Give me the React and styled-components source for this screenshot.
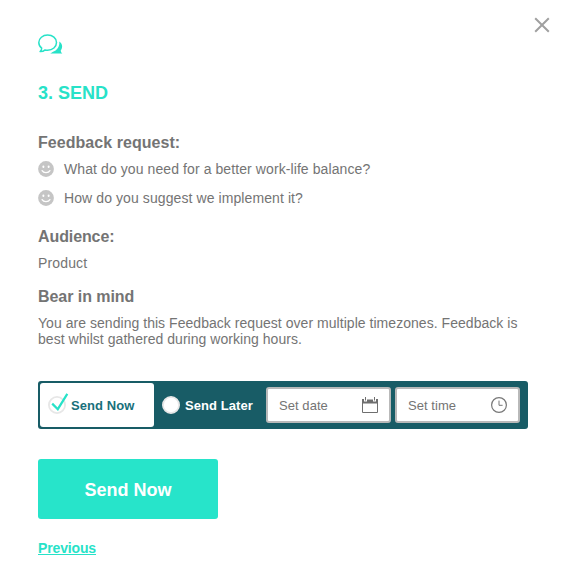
import { useState } from "react";
import styled, { createGlobalStyle } from "styled-components";

const GlobalStyle = createGlobalStyle`
    *{
        box-sizing: border-box;
    }
    body{
        margin: 0;
        background-color: #fff;
        color: #747474;
        font-family: "Liberation Sans", Arial, sans-serif;
        font-size: 14px;
        line-height: 16px;
    }
`;

const Modal = styled.div`
    position: relative;
    height: 576px;
    padding: 34px 38px 0;
    display: flex;
    flex-direction: column;
    align-items: flex-start;
    svg{
        display: block;
        flex-shrink: 0;
    }
`;

const CloseButton = styled.button`
    position: absolute;
    top: 17px;
    right: 16px;
    padding: 0;
    border: 0;
    background: none;
`;

const Title = styled.h1`
    margin: 29px 0 0;
    color: #27e2c8;
    font-size: 18px;
    line-height: 20px;
`;

const Heading = styled.h2`
    margin: ${props => props.$top}px 0 8px;
    font-size: 16px;
    line-height: 20px;
    letter-spacing: ${props => props.$spacing || 0}px;
`;

const Questions = styled.ul`
    margin: 0;
    padding: 0;
    list-style: none;
    display: grid;
    gap: 13px;
`;

const Question = styled.li`
    display: flex;
    gap: 10px;
    letter-spacing: .09px;
    white-space: nowrap;
`;

const Text = styled.p`
    margin: 0;
    width: 490px;
    letter-spacing: ${props => props.$spacing || .04}px;
`;

const Schedule = styled.div`
    display: flex;
    align-items: center;
    width: 490px;
    height: 48px;
    margin-top: 34px;
    padding: 2px;
    border-radius: 3px;
    background-color: #185c66;
`;

const Option = styled.button`
    display: flex;
    align-items: center;
    width: ${props => props.$width}px;
    height: 44px;
    padding: 0 0 0 8px;
    border: 0;
    border-radius: 3px;
    background-color: ${props => props.$active ? '#fff' : 'transparent'};
    color: ${props => props.$active ? '#18707b' : '#fff'};
    font: bold 13px "Liberation Sans", Arial, sans-serif;
    letter-spacing: .07px;
    white-space: nowrap;
    svg{
        margin-right: 5px;
        overflow: visible;
    }
`;

const Field = styled.div`
    display: flex;
    align-items: center;
    justify-content: space-between;
    width: 125px;
    height: 36px;
    margin-right: 4px;
    padding: 0 11px;
    border: 2px solid #b9b9b9;
    border-radius: 3px;
    background-color: #fff;
    font-size: 13px;
    letter-spacing: .06px;
    span{
        padding-top: 1px;
    }
`;

const SendButton = styled.button`
    width: 180px;
    height: 60px;
    margin-top: 30px;
    padding: 2px 0 0;
    border: 0;
    border-radius: 3px;
    background-color: #27e4ca;
    color: #fff;
    font: bold 18px "Liberation Sans", Arial, sans-serif;
`;

const Previous = styled.a`
    margin-top: 21px;
    color: #27e2c8;
    font-weight: bold;
    letter-spacing: -.14px;
    text-decoration: underline;
`;

function ChatIcon(){
    return(
        <svg width="25" height="20" viewBox="0 0 25 20">
            <path d="M9.6 1.1C4.7 1.1.8 4.3.8 8.5c0 2.4 1.1 4.3 2.9 5.6 0 1.4-.4 2.5-1.6 3.5 2 .1 3.7-.5 5-1.7.8.2 1.6.3 2.5.3 5 0 8.9-3.4 8.9-7.7S14.6 1.1 9.6 1.1z" fill="none" stroke="#27e2c8" strokeWidth="1.5" strokeLinejoin="round" />
            <path d="M21.3 7.6c3.5 2.4 3.6 6.3 1.4 9 .1 1.2.6 2.2 1.6 3H12.2c.9-.5 1.8-.9 2.4-1.5 4.5-1.6 7.3-5.5 6.7-10.5z" fill="#27e2c8" />
        </svg>
    );
}

function SmileIcon(){
    return(
        <svg width="16" height="16" viewBox="0 0 16 16">
            <circle cx="8" cy="8" r="7.9" fill="#c5c5c5" />
            <ellipse cx="5.4" cy="5.8" rx="1" ry="1.2" fill="#fff" />
            <ellipse cx="10.6" cy="5.8" rx="1" ry="1.2" fill="#fff" />
            <path d="M4.1 9.6c1.5 2.7 6.3 2.7 7.8 0" fill="none" stroke="#fff" strokeWidth="1.3" strokeLinecap="round" />
        </svg>
    );
}

function Radio({checked}){
    return(
        <svg width="18" height="18" viewBox="0 0 18 18">
            <circle cx="9" cy="9" r="8.1" fill="#fff" stroke="#e7e7e7" strokeWidth="1.8" />
            {checked && <path d="M4.2 7.6l5.6 5.6L19.3-2.1" fill="none" stroke="#27e2c8" strokeWidth="2.2" />}
        </svg>
    );
}

function CalendarIcon(){
    return(
        <svg width="16" height="16" viewBox="0 0 16 16">
            <path d="M.5 5v10.5h15V5" fill="none" stroke="#6f6f6f" />
            <path d="M0 2h2v2.5h3V2.4h6v2.1h3V2h2v4.6H0z" fill="#6f6f6f" />
            <path d="M3.5 0v3.5M12.5 0v3.5" stroke="#6f6f6f" />
        </svg>
    );
}

function ClockIcon(){
    return(
        <svg width="16" height="16" viewBox="0 0 16 16">
            <circle cx="8" cy="8" r="7.4" fill="none" stroke="#777" strokeWidth="1.2" />
            <path d="M8 3.6v4.7h3.6" fill="none" stroke="#777" />
        </svg>
    );
}

export default function App(){
    const [when, setWhen] = useState('now');
    return(
        <>
            <GlobalStyle />
            <Modal>
                <CloseButton aria-label="Close">
                    <svg width="16" height="16" viewBox="0 0 16 16">
                        <path d="M1.2 1.2l13.6 13.6M14.8 1.2L1.2 14.8" stroke="#a0a0a0" strokeWidth="2" />
                    </svg>
                </CloseButton>
                <ChatIcon />
                <Title>3. SEND</Title>
                <Heading $top={30} $spacing={.05}>Feedback request:</Heading>
                <Questions>
                    <Question><SmileIcon />What do you need for a better work-life balance?</Question>
                    <Question><SmileIcon />How do you suggest we implement it?</Question>
                </Questions>
                <Heading $top={21} $spacing={-.1}>Audience:</Heading>
                <Text $spacing={.15}>Product</Text>
                <Heading $top={16} $spacing={-.05}>Bear in mind</Heading>
                <Text>You are sending this Feedback request over multiple timezones. Feedback is best whilst gathered during working hours.</Text>
                <Schedule>
                    <Option $width={114} $active={when === 'now'} onClick={() => setWhen('now')}>
                        <Radio checked={when === 'now'} />Send Now
                    </Option>
                    <Option $width={112} $active={when === 'later'} onClick={() => setWhen('later')}>
                        <Radio checked={when === 'later'} />Send Later
                    </Option>
                    <Field><span>Set date</span><CalendarIcon /></Field>
                    <Field><span>Set time</span><ClockIcon /></Field>
                </Schedule>
                <SendButton>Send Now</SendButton>
                <Previous href="#">Previous</Previous>
            </Modal>
        </>
    );
}
